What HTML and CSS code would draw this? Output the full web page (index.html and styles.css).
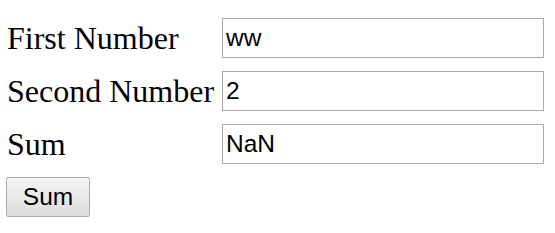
FILE: index.html
```html
<!DOCTYPE html>
<html>
<head>
<meta charset="utf-8">
<link rel="stylesheet" href="styles.css">
</head>
<body>
<form class="calc">
  <label class="label" for="a">First Number</label>
  <input class="field" id="a" type="text" value="ww">
  <label class="label" for="b">Second Number</label>
  <input class="field" id="b" type="text" value="2">
  <label class="label" for="s">Sum</label>
  <input class="field" id="s" type="text" value="NaN">
  <div class="actions"><button class="btn" type="button">Sum</button></div>
</form>
</body>
</html>
```
FILE: styles.css
```css
html, body {
  margin: 0;
  background: #fff;
}
body {
  padding: 18px 0 0 6px;
  font-family: "Liberation Serif", "Times New Roman", serif;
  color: #000;
}
.calc {
  display: grid;
  grid-template-columns: 216px 322px;
  row-gap: 13px;
  align-items: center;
}
.label {
  font-size: 32px;
  line-height: 40px;
  padding-left: 1px;
}
.field {
  box-sizing: border-box;
  width: 322px;
  height: 40px;
  margin: 0;
  border: 1px solid #a9a9a9;
  padding: 0 3px;
  font-family: "Liberation Sans", Arial, sans-serif;
  font-size: 24.5px;
  color: #000;
  background: #fff;
  outline: none;
}
.actions {
  grid-column: 1 / 3;
}
.btn {
  box-sizing: border-box;
  width: 84px;
  height: 40px;
  margin: 0;
  padding: 0;
  border: 1px solid #adadad;
  border-radius: 2px;
  background: linear-gradient(#f4f4f4, #e9e9e9 50%, #dcdcdc);
  font-family: "Liberation Sans", Arial, sans-serif;
  font-size: 24.5px;
  color: #000;
}
```
